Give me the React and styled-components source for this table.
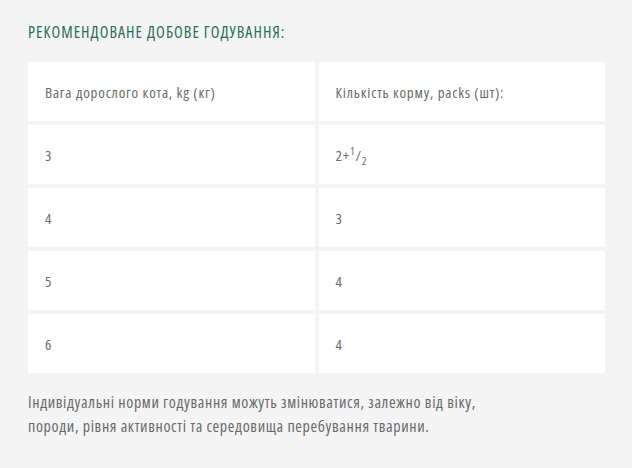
import styled, { createGlobalStyle } from 'styled-components'

const GlobalStyle = createGlobalStyle`
  html, body {
    margin: 0;
    padding: 0;
    background: #f4f4f4;
  }
  body {
    font-family: "Open Sans", "Noto Sans", sans-serif;
    font-stretch: 75%;
    letter-spacing: 0.05em;
    color: #666;
  }
`

const rows = [
  ['3', <>2+<sup>1</sup>/<sub>2</sub></>],
  ['4', '3'],
  ['5', '4'],
  ['6', '4'],
]

export default function App() {
  return (
    <>
      <GlobalStyle />
      <Section>
        <Title>Рекомендоване добове годування:</Title>
        <Table>
          <Cell><span>Вага дорослого кота, kg (кг)</span></Cell>
          <Cell><span>Кількість корму, packs (шт):</span></Cell>
          {rows.map(([w, q], i) => (
            <Row key={i}>
              <Cell><span>{w}</span></Cell>
              <Cell><span>{q}</span></Cell>
            </Row>
          ))}
        </Table>
        <Note>
          Індивідуальні норми годування можуть змінюватися, залежно від віку,
          породи, рівня активності та середовища перебування тварини.
        </Note>
      </Section>
    </>
  )
}

const Section = styled.div`
  padding: 21px 27px 0 28px;
`

const Title = styled.h3`
  margin: 0 0 19px;
  font-size: 16px;
  line-height: 22px;
  font-weight: 400;
  letter-spacing: 0.065em;
  text-transform: uppercase;
  color: #2a6e56;
`

const Table = styled.div`
  display: grid;
  grid-template-columns: 1fr 1fr;
  gap: 4px;
`

const Row = styled.div`
  display: contents;
`

const Cell = styled.div`
  background: #fff;
  height: 59px;
  display: flex;
  align-items: center;
  padding: 0 17px;
  font-size: 15px;
  color: #6a6a6a;

  sup, sub {
    font-size: 11px;
    line-height: 0;
  }
`

const Note = styled.p`
  margin: 17px 0 0;
  max-width: 490px;
  font-size: 16px;
  line-height: 24px;
  letter-spacing: 0.04em;
  color: #6a6a6a;
`
